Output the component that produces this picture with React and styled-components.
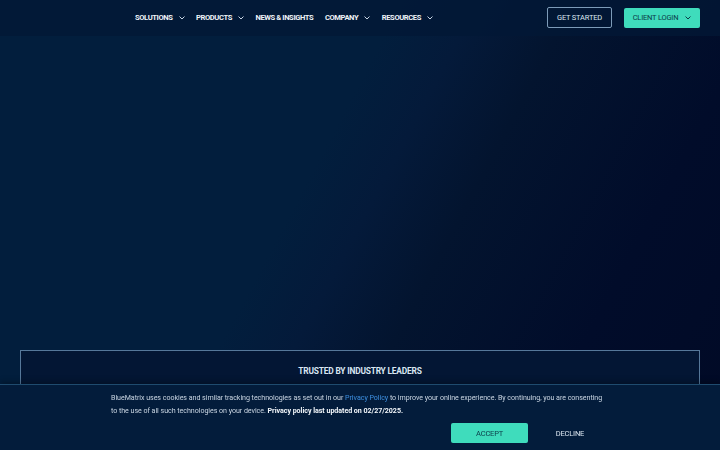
import styled, { createGlobalStyle } from 'styled-components'

const GlobalStyle = createGlobalStyle`
  html, body {
    margin: 0;
    padding: 0;
    background: #020f2c;
  }
  body {
    font-family: Roboto, "Liberation Sans", sans-serif;
    -webkit-font-smoothing: antialiased;
  }
  * {
    box-sizing: border-box;
  }
`

const Chevron = ({ color = '#c9d6e6' }) => (
  <svg width="6" height="4" viewBox="0 0 6 4" fill="none">
    <path d="M0.8 0.8 L3 3 L5.2 0.8" stroke={color} strokeWidth="1" strokeLinecap="round" strokeLinejoin="round" />
  </svg>
)

const navItems = [
  { label: 'SOLUTIONS', menu: true },
  { label: 'PRODUCTS', menu: true },
  { label: 'NEWS & INSIGHTS', menu: false },
  { label: 'COMPANY', menu: true },
  { label: 'RESOURCES', menu: true },
]

const App = () => {
  return (
    <>
      <GlobalStyle />
      <Page>
        <Header>
          <Nav>
            {navItems.map((item) => (
              <NavItem key={item.label}>
                {item.label}
                {item.menu && <Chevron />}
              </NavItem>
            ))}
          </Nav>
          <Actions>
            <OutlineButton>GET STARTED</OutlineButton>
            <LoginButton>
              CLIENT LOGIN
              <Chevron color="#0b3b48" />
            </LoginButton>
          </Actions>
        </Header>
        <Hero />
        <Trusted>
          <TrustedTitle>TRUSTED BY INDUSTRY LEADERS</TrustedTitle>
        </Trusted>
      </Page>
      <CookieBanner>
        <CookieInner>
          <CookieText>
            BlueMatrix uses cookies and similar tracking technologies as set out in our{' '}
            <PolicyLink href="#">Privacy Policy</PolicyLink> to improve your online experience. By continuing, you are consenting
            <br />
            to the use of all such technologies on your device. <strong>Privacy policy last updated on 02/27/2025.</strong>
          </CookieText>
          <CookieActions>
            <AcceptButton>ACCEPT</AcceptButton>
            <DeclineButton>DECLINE</DeclineButton>
          </CookieActions>
        </CookieInner>
      </CookieBanner>
    </>
  )
}

export default App

const Page = styled.div`
  width: 720px;
  height: 450px;
  overflow: hidden;
  display: flex;
  flex-direction: column;
  background: linear-gradient(118deg, #021e3d 0%, #021e3d 42%, #041a3a 50%, #03142f 60%, #010c2a 80%, #010a26 100%);
`

const Header = styled.header`
  height: 36px;
  flex-shrink: 0;
  display: flex;
  align-items: center;
  justify-content: space-between;
  padding: 0 20px 1px 135px;
  background: rgba(2, 24, 54, 0.8);
`

const Nav = styled.nav`
  display: flex;
  align-items: center;
  gap: 11.5px;
`

const NavItem = styled.span`
  display: flex;
  align-items: center;
  gap: 6px;
  color: #eef3f8;
  font-size: 7.6px;
  font-weight: 700;
  letter-spacing: -0.4px;
  svg {
    margin-top: 1px;
  }
`

const Actions = styled.div`
  display: flex;
  align-items: center;
  gap: 12px;
`

const OutlineButton = styled.button`
  width: 65px;
  height: 21px;
  border: 1px solid #7d9bb8;
  border-radius: 2px;
  background: transparent;
  color: #dce6f0;
  font-family: Roboto, sans-serif;
  font-size: 7.5px;
  letter-spacing: -0.2px;
  padding: 0;
`

const LoginButton = styled.button`
  width: 76px;
  height: 20px;
  border: none;
  border-radius: 2px;
  background: #3fdcbc;
  color: #0b3b48;
  font-family: Roboto, sans-serif;
  font-size: 7.5px;
  letter-spacing: -0.2px;
  display: flex;
  align-items: center;
  justify-content: center;
  gap: 7px;
  padding: 0;
`

const Hero = styled.section`
  height: 314px;
  flex-shrink: 0;
`

const Trusted = styled.section`
  margin: 0 20px;
  height: 80px;
  border: 1px solid #56789a;
  border-bottom: none;
  background: #031634;
  display: flex;
  justify-content: center;
  padding-top: 15px;
`

const TrustedTitle = styled.h2`
  margin: 0;
  color: #d8e6f2;
  font-size: 8.4px;
  font-weight: 700;
  letter-spacing: -0.2px;
`

const CookieBanner = styled.div`
  position: fixed;
  left: 0;
  right: 0;
  bottom: 0;
  height: 66px;
  background: #031c3b;
  border-top: 1px solid #1f4b6e;
  box-shadow: 0 -2px 6px rgba(0, 0, 0, 0.3);
`

const CookieInner = styled.div`
  width: 501px;
  margin-left: 111px;
  padding-top: 7px;
`

const CookieText = styled.p`
  margin: 0;
  color: #c9d5e2;
  font-size: 7.1px;
  line-height: 12.5px;
  letter-spacing: -0.04px;
  white-space: nowrap;
  strong {
    color: #f2f6fa;
    font-weight: 700;
  }
`

const PolicyLink = styled.a`
  color: #3d8fe0;
  text-decoration: none;
`

const CookieActions = styled.div`
  display: flex;
  justify-content: flex-end;
  align-items: center;
  margin-top: 6px;
`

const AcceptButton = styled.button`
  width: 77px;
  height: 20px;
  border: none;
  border-radius: 2px;
  background: #3fdcbc;
  color: #0b3b48;
  font-family: Roboto, sans-serif;
  font-size: 7.5px;
  letter-spacing: -0.2px;
  padding: 0;
`

const DeclineButton = styled.button`
  width: 84px;
  height: 20px;
  border: none;
  background: transparent;
  color: #dce6f0;
  font-family: Roboto, sans-serif;
  font-size: 7.5px;
  letter-spacing: -0.2px;
  padding: 0;
`
